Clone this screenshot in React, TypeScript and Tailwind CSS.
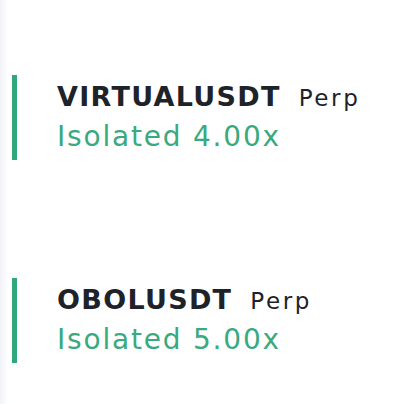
import React from "react";

const items = [
  { sym: "VIRTUALUSDT", lev: "Isolated 4.00x" },
  { sym: "OBOLUSDT", lev: "Isolated 5.00x" },
];

export default function App() {
  return (
    <div className="w-[400px] h-[404px] bg-white flex" style={{ fontFamily: '"DejaVu Sans", Arial, sans-serif' }}>
      <div className="w-[8px] h-full bg-gradient-to-r from-[#f1f3f8] to-white" />
      <div className="flex flex-col gap-[118px] pt-[75px] pl-[4px]">
        {items.map((it) => (
          <div key={it.sym} className="flex h-[85px]">
            <div className="w-[5px] h-full bg-[#2fa87b]" />
            <div className="flex flex-col justify-center pl-[40px] pb-[3px]">
              <div className="flex items-baseline leading-[40px]">
                <span className="text-[27px] font-bold text-[#1e2329] tracking-[1.3px]">{it.sym}</span>
                <span className="ml-[18px] text-[23px] text-[#1e2329] tracking-[2.6px]">Perp</span>
              </div>
              <div className="text-[28px] leading-[38px] text-[#3aa97e] tracking-[1.8px]">{it.lev}</div>
            </div>
          </div>
        ))}
      </div>
    </div>
  );
}
